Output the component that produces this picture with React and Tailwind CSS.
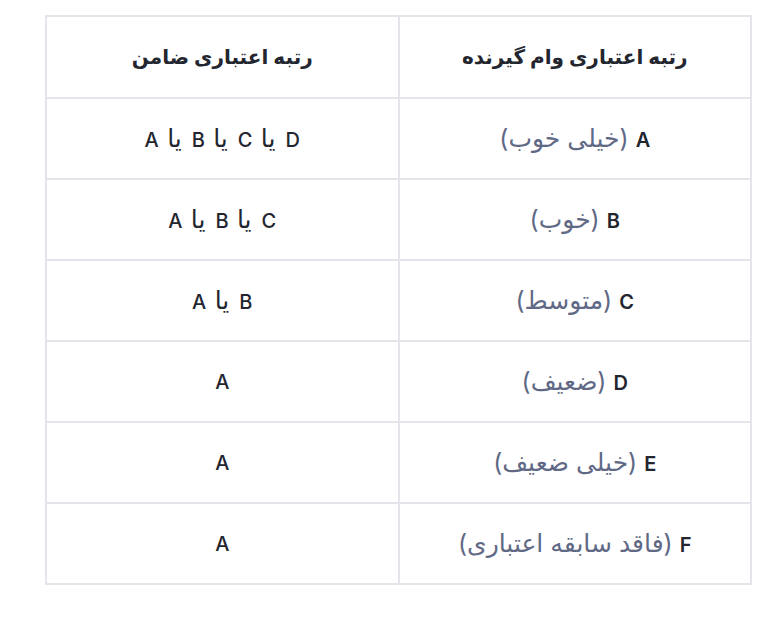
const rows = [
  { grade: "A", label: "(خیلی خوب)", guarantor: "D یا C یا B یا A" },
  { grade: "B", label: "(خوب)", guarantor: "C یا B یا A" },
  { grade: "C", label: "(متوسط)", guarantor: "B یا A" },
  { grade: "D", label: "(ضعیف)", guarantor: "A" },
  { grade: "E", label: "(خیلی ضعیف)", guarantor: "A" },
  { grade: "F", label: "(فاقد سابقه اعتباری)", guarantor: "A" },
];

// latin grades in Inter, persian words larger so they match the reference size
const Mixed = ({ text }) =>
  text.split(" ").map((w, i) =>
    /^[A-Z]$/.test(w) ? (
      <span key={i} className="text-[20px] font-medium">{(i > 0 ? " " : "") + w}</span>
    ) : (
      <span key={i} className="text-[25px]">{" " + w}</span>
    )
  );

export default function App() {
  return (
    <div
      className="bg-white w-[773px] h-[622px] pt-[15px] pl-[45px]"
      style={{ fontFamily: 'Inter, "DejaVu Sans", sans-serif' }}
    >
      <table dir="rtl" className="w-[707px] border-collapse table-fixed text-[#23262f]">
        <thead>
          <tr>
            <th className="h-[82px] border-2 border-[#e4e5ea] text-[20px] font-semibold">رتبه اعتباری وام گیرنده</th>
            <th className="h-[82px] border-2 border-[#e4e5ea] text-[20px] font-semibold">رتبه اعتباری ضامن</th>
          </tr>
        </thead>
        <tbody>
          {rows.map((r) => (
            <tr key={r.grade}>
              <td className="h-[81px] border-2 border-[#e4e5ea] text-center leading-none">
                <span className="text-[20px] font-semibold">{r.grade}</span>
                <span className="text-[25px] text-[#5f6985]">{" " + r.label}</span>
              </td>
              <td className="h-[81px] border-2 border-[#e4e5ea] text-center leading-none [word-spacing:3px]">
                <Mixed text={r.guarantor} />
              </td>
            </tr>
          ))}
        </tbody>
      </table>
    </div>
  );
}
